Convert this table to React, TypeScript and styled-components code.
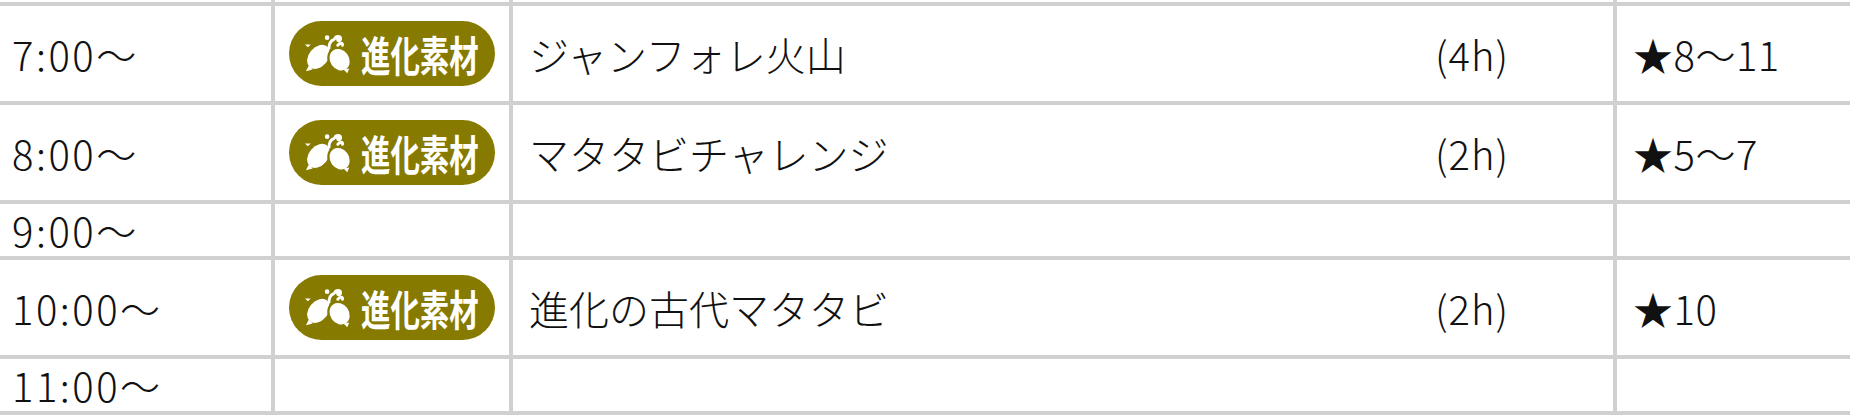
import React from "react";
import styled, { createGlobalStyle } from "styled-components";

const GlobalStyle = createGlobalStyle`
  html, body {
    margin: 0;
    padding: 0;
    background: #ffffff;
    overflow: hidden;
  }
  body {
    font-family: "Noto Sans CJK JP", "Noto Sans", sans-serif;
  }
`;

const Frame = styled.div`
  width: 1850px;
  height: 416px;
  overflow: hidden;
`;

const Schedule = styled.table`
  border-collapse: collapse;
  table-layout: fixed;
  width: 1917px;
  margin: -50px 0 0 -4px;
  font-size: 40px;
  font-weight: 300;
  line-height: 48px;
  color: #111111;
`;

const Cell = styled.td`
  border: 4px solid #d0d0d0;
  padding: 2px 14px;
  vertical-align: middle;
  white-space: nowrap;
  overflow: hidden;
`;

const TimeCell = styled(Cell)`
  padding-left: 12px;
  letter-spacing: 2.5px;
`;

const Badge = styled.span`
  display: inline-flex;
  align-items: center;
  box-sizing: border-box;
  width: 206px;
  height: 65px;
  margin: 13px 0;
  padding-left: 16px;
  border-radius: 33px;
  background: #877a00;
  color: #ffffff;
  vertical-align: middle;
`;

const BadgeLabel = styled.span`
  display: inline-block;
  margin-left: 6px;
  margin-right: -50px;
  font-size: 42px;
  line-height: 1;
  font-weight: 700;
  transform: scaleX(0.7);
  transform-origin: left center;
`;

const NameWrap = styled.div`
  display: flex;
  align-items: center;
`;

const Name = styled.span`
  flex: 1;
  padding-left: 2px;
`;

const Duration = styled.span`
  width: 164px;
  letter-spacing: 1px;
`;

const Rank = styled.span`
  padding-left: 2px;
  letter-spacing: 0.5px;
`;

function MaterialIcon() {
  return (
    <svg width="50" height="40" viewBox="0 0 52 40" aria-hidden="true">
      <g fill="#ffffff">
        <ellipse cx="14" cy="23" rx="14" ry="10" transform="rotate(-50 14 23)" />
        <path d="M4 32 L1 38 L8 36 Z" />
        <path d="M3 13 L0 10 L6 10 Z" />
      </g>
      <ellipse
        cx="36"
        cy="26"
        rx="13"
        ry="11"
        transform="rotate(55 36 26)"
        fill="#ffffff"
        stroke="#877a00"
        strokeWidth="2.4"
      />
      <path d="M40 36 L44 40 L46 35 Z" fill="#ffffff" />
      <g fill="none" stroke="#ffffff" strokeWidth="3" strokeLinecap="round">
        <path d="M25 14 C25 9 27 6 30 5" />
        <path d="M31 4 C32 1 37 1 37 4 C37 7 33 7 34 4" />
        <path d="M34 11 C36 8 40 8 39 11" />
      </g>
      <circle cx="23" cy="3" r="2.4" fill="#ffffff" />
    </svg>
  );
}

type Slot = {
  time: string;
  name?: string;
  duration?: string;
  rank?: string;
};

const slots: Slot[] = [
  { time: "" },
  { time: "7:00〜", name: "ジャンフォレ火山", duration: "(4h)", rank: "★8〜11" },
  { time: "8:00〜", name: "マタタビチャレンジ", duration: "(2h)", rank: "★5〜7" },
  { time: "9:00〜" },
  { time: "10:00〜", name: "進化の古代マタタビ", duration: "(2h)", rank: "★10" },
  { time: "11:00〜" },
];

export default function App() {
  return (
    <>
      <GlobalStyle />
      <Frame>
        <Schedule>
          <colgroup>
            <col style={{ width: 275 }} />
            <col style={{ width: 238 }} />
            <col style={{ width: 1104 }} />
            <col style={{ width: 300 }} />
          </colgroup>
          <tbody>
            {slots.map((slot, index) => (
              <tr key={index} style={index === 0 ? { height: 52 } : undefined}>
                <TimeCell>{slot.time}</TimeCell>
                <Cell>
                  {slot.name && (
                    <Badge>
                      <MaterialIcon />
                      <BadgeLabel>進化素材</BadgeLabel>
                    </Badge>
                  )}
                </Cell>
                <Cell>
                  {slot.name && (
                    <NameWrap>
                      <Name>{slot.name}</Name>
                      <Duration>{slot.duration}</Duration>
                    </NameWrap>
                  )}
                </Cell>
                <Cell>{slot.rank && <Rank>{slot.rank}</Rank>}</Cell>
              </tr>
            ))}
          </tbody>
        </Schedule>
      </Frame>
    </>
  );
}
